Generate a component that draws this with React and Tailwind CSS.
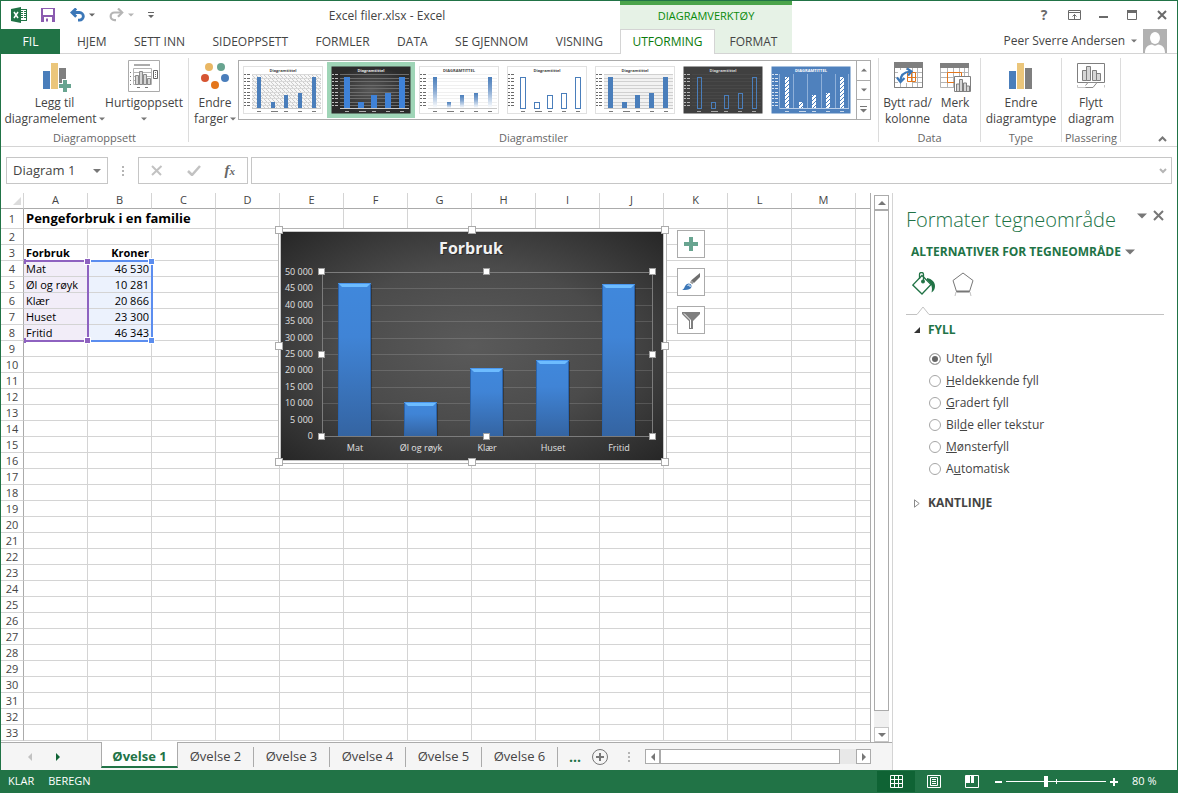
import React, { useState } from "react";

const columns = ["A", "B", "C", "D", "E", "F", "G", "H", "I", "J", "K", "L", "M"];

const forbruk = [
  { navn: "Mat", kroner: 46530 },
  { navn: "Øl og røyk", kroner: 10281 },
  { navn: "Klær", kroner: 20866 },
  { navn: "Huset", kroner: 23300 },
  { navn: "Fritid", kroner: 46343 },
];

const tabs = ["HJEM", "SETT INN", "SIDEOPPSETT", "FORMLER", "DATA", "SE GJENNOM", "VISNING"];

const sheets = ["Øvelse 1", "Øvelse 2", "Øvelse 3", "Øvelse 4", "Øvelse 5", "Øvelse 6"];

// before / key / after: the middle letter is the underlined access key
const fills = [
  ["Uten f", "y", "ll"],
  ["", "H", "eldekkende fyll"],
  ["", "G", "radert fyll"],
  ["Bil", "d", "e eller tekstur"],
  ["", "M", "ønsterfyll"],
  ["A", "u", "tomatisk"],
];

function formatNumber(n) {
  return String(n).replace(/\B(?=(\d{3})+$)/g, " ");
}

function Arrow({ dir = "down", className = "text-[#777777]", size = 7 }) {
  const points = {
    down: "0,2 8,2 4,6",
    up: "0,6 8,6 4,2",
    left: "6,0 6,8 2,4",
    right: "2,0 2,8 6,4",
  };
  return (
    <svg width={size} height={size} viewBox="0 0 8 8" className={`inline-block shrink-0 ${className}`}>
      <polygon points={points[dir]} fill="currentColor" />
    </svg>
  );
}

function QuickAccess() {
  return (
    <div className="flex items-center pl-2.5">
      <svg width="16" height="16" viewBox="0 0 16 16">
        <rect x="8.5" y="2.5" width="7" height="11" fill="#fff" stroke="#217346" />
        <path d="M10 4.5h2M13 4.5h2M10 6.5h2M13 6.5h2M10 8.5h2M13 8.5h2M10 10.5h2M13 10.5h2" stroke="#217346" />
        <path d="M0 2 10 0v16L0 14z" fill="#217346" />
        <path d="M3 5l4 6M7 5l-4 6" stroke="#fff" strokeWidth="1.5" />
      </svg>
      <button aria-label="Lagre" className="ml-3.5">
        <svg width="14" height="14" viewBox="0 0 14 14">
          <path d="M0 0h14v14H0z" fill="#8b5bb0" />
          <path d="M2 1h10v6H2zM3 9h8v5H3z" fill="#fff" />
          <path d="M5 10.5h2v3H5z" fill="#8b5bb0" />
        </svg>
      </button>
      <button aria-label="Angre" className="ml-[15px] flex items-center">
        <svg width="15" height="14" viewBox="0 0 15 14">
          <path d="M2 4.5h7.500a3.800 3.800 0 0 1 0 7.700H8" fill="none" stroke="#3b77b8" strokeWidth="2.800" />
          <path d="M6.200.500 2 4.500 6.200 8.700" fill="none" stroke="#3b77b8" strokeWidth="2.800" />
        </svg>
        <Arrow className="ml-1 text-[#666666]" size={6} />
      </button>
      <button aria-label="Gjør om" className="ml-3.5 flex items-center">
        <svg width="15" height="14" viewBox="0 0 15 14">
          <path d="M13 4.500H5.500a3.800 3.800 0 0 0 0 7.700H7" fill="none" stroke="#b5b5b5" strokeWidth="2.200" />
          <path d="M9 .500 13.200 4.500 9 8.700" fill="none" stroke="#b5b5b5" strokeWidth="2.200" />
        </svg>
        <Arrow className="ml-1 text-[#b5b5b5]" size={6} />
      </button>
      <button aria-label="Tilpass" className="ml-3.5">
        <svg width="6" height="7" viewBox="0 0 6 7" fill="#666666">
          <path d="M0 0h6v1H0zM0 3h6L3 6z" />
        </svg>
      </button>
    </div>
  );
}

function WindowButtons() {
  return (
    <div className="flex h-7 items-center justify-end pr-px text-[#6a6a6a]">
      <button aria-label="Hjelp" className="w-7 text-center text-sm leading-4 font-bold">?</button>
      <button aria-label="Båndvisning" className="flex w-8 justify-center">
        <svg width="13" height="10" viewBox="0 0 13 10" fill="none" stroke="currentColor">
          <path d="M.5.5h12v9H.5zM.5 2.500h12M6.500 9V4.500M4.500 6.500l2-2 2 2" />
        </svg>
      </button>
      <button aria-label="Minimer" className="flex w-[26px] justify-center">
        <svg width="9" height="9" viewBox="0 0 9 9"><path d="M0 5h9v2H0z" fill="currentColor" /></svg>
      </button>
      <button aria-label="Maksimer" className="flex w-8 justify-center">
        <svg width="10" height="10" viewBox="0 0 10 10">
          <path d="M.5.5h9v9h-9z" fill="none" stroke="currentColor" />
          <path d="M0 0h10v3H0z" fill="currentColor" />
        </svg>
      </button>
      <button aria-label="Lukk" className="flex w-7 justify-center">
        <svg width="10" height="10" viewBox="0 0 10 10"><path d="M1 1l8 8M9 1 1 9" stroke="currentColor" strokeWidth="2" /></svg>
      </button>
    </div>
  );
}

function Header() {
  return (
    <header className="flex text-xs text-[#444444]">
      <div className="flex w-[619px] shrink-0 flex-col">
        <div className="flex h-7 items-center">
          <QuickAccess />
          <div className="flex-1 pt-0.5 text-center">Excel filer.xlsx - Excel</div>
        </div>
        <nav className="flex h-[25px]">
          <button className="w-[59px] bg-[#217346] text-white">FIL</button>
          <div className="flex flex-1 items-center justify-between border-b border-[#d4d4d4] pt-0.5 pr-[17px] pl-[17px]">
            {tabs.map((t) => (
              <button key={t}>{t}</button>
            ))}
          </div>
        </nav>
      </div>
      <div className="w-[172px] shrink-0 border-t-4 border-[#4aa44a] bg-[#e6f2e6]">
        <div className="flex h-6 items-center justify-center pb-0.5 text-[11px] text-[#0a8a0a]">DIAGRAMVERKTØY</div>
        <div className="flex h-[25px]">
          <button className="w-[95px] border border-b-0 border-[#d4d4d4] bg-white text-[#0a7a0a]">UTFORMING</button>
          <button className="flex-1 border-b border-[#d4d4d4] pt-0.5">FORMAT</button>
        </div>
      </div>
      <div className="flex min-w-0 flex-1 flex-col">
        <WindowButtons />
        <div className="flex h-[25px] items-center justify-end border-b border-[#d4d4d4] pr-2.5 whitespace-nowrap">
          <span>Peer Sverre Andersen</span>
          <Arrow className="mx-1.5 text-[#777777]" size={6} />
          <svg width="24" height="24" viewBox="0 0 24 24">
            <path d="M0 0h24v24H0z" fill="#b1b1b1" />
            <ellipse cx="12" cy="9" rx="5" ry="6" fill="#fff" />
            <path d="M2 24c0-6 3-8 7-8.500 2 1.500 4 1.500 6 0 4 .5 7 2.500 7 8.500z" fill="#fff" />
          </svg>
        </div>
      </div>
    </header>
  );
}

function BarsIcon({ plus }) {
  return (
    <svg width="32" height="32" viewBox="0 0 32 32">
      <rect x="4" y="11" width="7" height="18" fill="#4a7ebb" />
      <rect x="12" y="3" width="7" height="26" fill="#ebc67b" />
      <rect x="20" y="8" width="7" height={plus ? 15 : 21} fill="#7f7f7f" />
      {plus && <path d="M23 19h6v4h3v6h-3v3h-6v-3h-4v-6h4z" fill="#fff" />}
      {plus && <path d="M24 20h4v4h4v4h-4v4h-4v-4h-4v-4h4z" fill="#68a490" />}
    </svg>
  );
}

function LayoutIcon() {
  return (
    <svg width="32" height="32" viewBox="0 0 32 32" fill="none" stroke="#8a8a8a">
      <path d="M.5.5h31v31H.5z" stroke="#ababab" />
      <path d="M6 5h16" stroke="#ababab" strokeWidth="2" />
      <path d="M5.500 8.500h18v16h-18zM5 12.500h18M5 16.500h18M5 20.500h18" stroke="#b5b5b5" />
      <path d="M7.500 24.500v-9h3v9zM11.500 24.500v-13h3v13zM15.500 24.500v-10h3v10zM19.500 24.500v-6h3v6z" fill="#d6d6d6" />
      <path d="M25.500 10.500h4v8h-4z" fill="#fff" stroke="#666666" />
      <path d="M27 12.500h1M27 14.500h1M27 16.500h1M2 12.500h1M2 16.500h1M2 20.500h1M2 24.500h1M9 27.500h3M17 27.500h3" stroke="#777" />
    </svg>
  );
}

function ColorsIcon() {
  return (
    <svg width="32" height="32" viewBox="0 0 32 32">
      <circle cx="10" cy="7" r="4" fill="#e9b764" />
      <circle cx="22" cy="7" r="4" fill="#68a490" />
      <circle cx="6" cy="18" r="4" fill="#d65532" />
      <circle cx="26" cy="18" r="4" fill="#4a7ebb" />
      <circle cx="16" cy="25" r="4" fill="#e4761b" />
    </svg>
  );
}

function SwitchIcon() {
  return (
    <svg width="32" height="32" viewBox="0 0 32 32" fill="none">
      <path d="M2.500 7.500h28v20h-28zM2 12.500h28M2 17.500h28M2 22.500h28M8.500 8v20M14.500 8v20M20.500 8v20M25.500 8v20" stroke="#b5b5b5" />
      <path d="M6 10h14v13H6z" fill="#fff" />
      <path d="M15.500 12.500h8v9h-8zM19.500 12.500v9M16 17.500h8" stroke="#e4761b" />
      <path d="M2.500 7.500h28v20h-28z" stroke="#7f7f7f" />
      <path d="M2 2h29v6H2z" fill="#7f7f7f" />
      <path d="M8.500 21c0-6 3.500-9 10-9.500" stroke="#3b77b8" strokeWidth="2.200" />
      <path d="M15 8.500l4.500 3-3.500 4M5 17.500l3.500 4.500 4-4" stroke="#3b77b8" strokeWidth="2.200" />
    </svg>
  );
}

function SelectDataIcon() {
  return (
    <svg width="32" height="32" viewBox="0 0 32 32" fill="none">
      <path d="M1.500 7.500h28v20h-28zM2 12.500h27M2 17.500h27M2 22.500h27M8.500 8v20M14.500 8v20M20.500 8v20M25.500 8v20" stroke="#b5b5b5" />
      <path d="M8.500 12.500h14v10h-14z" stroke="#e4761b" />
      <path d="M1 3h29v5H1z" fill="#7f7f7f" />
      <path d="M15.500 16.500h16v15h-16z" fill="#fff" stroke="#7f7f7f" />
      <path d="M17.500 31v-7h3v7M20.500 31V19.500h3V31M24.500 31v-8h3v8M27.500 31v-5h3v5" fill="#d6d6d6" stroke="#7f7f7f" />
    </svg>
  );
}

function MoveIcon() {
  return (
    <svg width="32" height="32" viewBox="0 0 32 32" fill="none" stroke="#7f7f7f">
      <path d="M2.500 3.500h27v19h-27z" />
      <path d="M7.500 20.500v-10h4v10zM11.500 20.500v-14h4v14zM17.500 20.500v-10h4v10zM21.500 20.500v-7h4v7z" fill="#d6d6d6" />
      <path d="M10 27.500h8l4-5h-9l-2.500 3" fill="#fff" stroke="#8a8a8a" />
      <path d="M2.500 25v2.500h8M29.500 25v2.500" stroke="#c6c6c6" />
    </svg>
  );
}

function RibbonButton({ icon, lines, arrow, className }) {
  return (
    <button className={`flex flex-col items-center pt-0.5 text-xs leading-4 whitespace-nowrap text-[#444444] ${className}`}>
      {icon}
      <span className="mt-[3px]">{lines[0]}</span>
      <span className="flex h-4 items-center gap-0.5">
        {lines[1]}
        {arrow && <Arrow size={6} />}
      </span>
    </button>
  );
}

function RibbonGroup({ label, children }) {
  return (
    <>
      <section className="flex flex-col">
        <div className="flex h-[72px]">{children}</div>
        <div className="text-center text-[11px] leading-4 text-[#666666]">{label}</div>
      </section>
      <div className="h-[84px] w-px bg-[#dcdcdc]" />
    </>
  );
}

const thumbStyles = [
  { title: "Diagramtittel", bg: "#ffffff", plot: "url(#checks)", grid: "#d9d9d9", fg: "#444444", w: 4, fill: "#4a7ebb" },
  { title: "Diagramtittel", bg: "url(#darkThumb)", grid: "#6c6c6c", fg: "#e6e6e6", w: 6, fill: "#3f82d8" },
  { title: "DIAGRAMTITTEL", bg: "#ffffff", grid: "#f0f0f0", fg: "#444444", w: 4, fill: "url(#fadeBar)" },
  { title: "Diagramtittel", bg: "#ffffff", fg: "#444444", w: 5, fill: "#ffffff", stroke: "#4a7ebb" },
  { title: "Diagramtittel", bg: "#ffffff", plot: "#f2f2f2", grid: "#d0d0d0", fg: "#444444", w: 5, fill: "#4a7ebb" },
  { title: "Diagramtittel", bg: "#404040", grid: "#484848", fg: "#d6d6d6", w: 4, fill: "none", stroke: "#4a7ebb" },
  { title: "DIAGRAMTITTEL", bg: "#4f81bd", fg: "#ffffff", w: 4, fill: "url(#hatch)", columns: true },
];

function ThumbDefs() {
  return (
    <svg width="0" height="0" className="absolute">
      <defs>
        <pattern id="checks" width="4" height="4" patternUnits="userSpaceOnUse">
          <path d="M0 0h4v4H0z" fill="#f7f7f7" />
          <path d="M0 0l4 4" stroke="#cccccc" />
        </pattern>
        <pattern id="hatch" width="4" height="4" patternUnits="userSpaceOnUse">
          <path d="M0 0h4v4H0z" fill="#ffffff" />
          <path d="M-1 5 5-1M-1 1 1-1M3 5l2-2" stroke="#4f81bd" strokeWidth="1" />
        </pattern>
        <linearGradient id="fadeBar" x1="0" y1="0" x2="0" y2="1">
          <stop offset="0" stopColor="#4a7ebb" />
          <stop offset="0.400" stopColor="#7fa3cf" />
          <stop offset="1" stopColor="#ffffff" />
        </linearGradient>
        <radialGradient id="darkThumb">
          <stop offset="0" stopColor="#595959" />
          <stop offset="1" stopColor="#2b2b2b" />
        </radialGradient>
      </defs>
    </svg>
  );
}

function Thumb({ s }) {
  const tops = [11, 36, 29, 27, 11];
  return (
    <svg width="80" height="48" viewBox="0 0 80 48">
      <rect x="0.5" y="0.5" width="79" height="47" fill={s.bg} stroke={s.bg === "#ffffff" ? "#e1e1e1" : "none"} />
      {s.plot && <rect x="9" y="8" width="69" height="34" fill={s.plot} />}
      {s.grid &&
        [8, 12, 15, 19, 22, 26, 29, 32, 36, 39].map((y) => (
          <path key={y} d={`M9 ${y + 0.5}h69`} stroke={s.grid} />
        ))}
      {s.columns && <path d="M8.500 8v35M22.500 8v35M36.500 8v35M50.500 8v35M64.500 8v35M77.500 8v35" stroke="#8fb0d9" />}
      {!s.stroke && <path d="M9 42.500h69" stroke={s.columns ? "#b9cee8" : "#c8c8c8"} />}
      {[8, 12, 15, 19, 22, 26, 29, 32, 36, 39].map((y) => (
        <path key={y} d={`M1 ${y + 0.5}h2M4 ${y + 0.5}h3`} stroke={s.fg} opacity="0.8" />
      ))}
      {tops.map((y, i) => {
        const cx = 16 + i * 14 - (i > 1 ? 1 : 0);
        const x = Math.floor(cx - s.w / 2);
        return (
          <g key={i}>
            <rect
              x={s.stroke ? x + 0.5 : x}
              y={y + (s.stroke ? 0.5 : 0)}
              width={s.w}
              height={42 - y}
              fill={s.fill}
              stroke={s.stroke || "none"}
            />
            <path d={`M${cx - 2} 45.500h${i === 1 ? 7 : 4}`} stroke={s.fg} opacity="0.7" />
          </g>
        );
      })}
      <text x="40" y="5.500" fontSize="4" fontWeight="700" textAnchor="middle" fill={s.fg}>
        {s.title}
      </text>
    </svg>
  );
}

function StyleGallery() {
  const [selected, setSelected] = useState(1);
  return (
    <div className="mt-0.5 flex h-[60px] border border-[#ababab]">
      <ThumbDefs />
      {thumbStyles.map((s, i) => (
        <button
          key={i}
          aria-label={`Stil ${i + 1}`}
          onClick={() => setSelected(i)}
          className={`mt-px h-14 w-[88px] p-1 ${selected === i ? "bg-[#9fd5b7]" : ""}`}
        >
          <Thumb s={s} />
        </button>
      ))}
      <div className="ml-px flex w-[14px] flex-col divide-y divide-[#ababab] border-l border-[#ababab]">
        <button aria-label="Forrige rad" className="flex flex-1 items-center justify-center">
          <Arrow dir="up" size={6} />
        </button>
        <button aria-label="Neste rad" className="flex flex-1 items-center justify-center">
          <Arrow size={6} />
        </button>
        <button aria-label="Mer" className="flex flex-1 items-center justify-center">
          <svg width="7" height="7" viewBox="0 0 7 7" fill="#777777"><path d="M0 0h7v1H0zM0 3h7L3.500 6.500z" /></svg>
        </button>
      </div>
    </div>
  );
}

function Ribbon() {
  return (
    <div className="relative flex h-[93px] items-start border-b border-[#d4d4d4] pt-1">
      <RibbonGroup label="Diagramoppsett">
        <RibbonButton icon={<BarsIcon plus />} lines={["Legg til", "diagramelement"]} arrow className="w-[107px]" />
        <RibbonButton icon={<LayoutIcon />} lines={["Hurtigoppsett", ""]} arrow className="mr-2 w-[72px]" />
      </RibbonGroup>
      <RibbonGroup label="Diagramstiler">
        <RibbonButton icon={<ColorsIcon />} lines={["Endre", "farger"]} arrow className="w-[49px] pl-[3px]" />
        <StyleGallery />
        <div className="w-[7px]" />
      </RibbonGroup>
      <RibbonGroup label="Data">
        <RibbonButton icon={<SwitchIcon />} lines={["Bytt rad/", "kolonne"]} className="w-[57px]" />
        <RibbonButton icon={<SelectDataIcon />} lines={["Merk", "data"]} className="mr-1.5 w-[38px]" />
      </RibbonGroup>
      <RibbonGroup label="Type">
        <RibbonButton icon={<BarsIcon />} lines={["Endre", "diagramtype"]} className="w-20" />
      </RibbonGroup>
      <RibbonGroup label="Plassering">
        <RibbonButton icon={<MoveIcon />} lines={["Flytt", "diagram"]} className="w-[58px]" />
      </RibbonGroup>
      <button aria-label="Skjul båndet" className="mr-2.5 mb-1 ml-auto self-end text-[#777777]">
        <svg width="9" height="6" viewBox="0 0 9 6"><path d="M1 5l3.500-3.500L8 5" fill="none" stroke="currentColor" strokeWidth="2" /></svg>
      </button>
    </div>
  );
}

function FormulaBar() {
  return (
    <div className="flex pt-2.5 pr-[5px] pb-[9px] pl-[5px] text-[#444444]">
      <div className="flex h-[27px] w-[102px] items-center border border-[#c6c6c6]">
        <input aria-label="Navneboks" defaultValue="Diagram 1" className="w-0 flex-1 pl-1.5 text-[13px] outline-none" />
        <Arrow className="mr-1.5 text-[#777777]" size={8} />
      </div>
      <div className="flex w-[30px] flex-col items-center justify-center gap-0.5">
        <i className="size-0.5 bg-[#b5b5b5]" />
        <i className="size-0.5 bg-[#b5b5b5]" />
        <i className="size-0.5 bg-[#b5b5b5]" />
      </div>
      <div className="flex w-[110px] items-center justify-between border border-[#c6c6c6] px-3">
        <button aria-label="Avbryt">
          <svg width="12" height="11" viewBox="0 0 12 11"><path d="M1 1l9 9M10.500 1 1 10" stroke="#c2c2c2" strokeWidth="2" /></svg>
        </button>
        <button aria-label="Skriv inn">
          <svg width="14" height="11" viewBox="0 0 14 11"><path d="M1 6l4 4 8-9" fill="none" stroke="#c2c2c2" strokeWidth="2.500" /></svg>
        </button>
        <button aria-label="Sett inn funksjon" className="font-['Liberation_Serif',serif] text-[15px] leading-4 font-bold text-[#666666] italic">
          f<span className="text-[11px]">x</span>
        </button>
      </div>
      <div className="ml-[3px] flex flex-1 items-center border border-[#c6c6c6]">
        <input aria-label="Formellinje" className="w-0 flex-1 px-2 text-xs outline-none" />
        <svg width="8" height="6" viewBox="0 0 8 6" className="mr-1"><path d="M1 1l3 3 3-3" fill="none" stroke="#b5b5b5" strokeWidth="2" /></svg>
      </div>
    </div>
  );
}

function cellFor(row, col) {
  if (row === 1 && col === "A") return "Pengeforbruk i en familie";
  if (row === 3 && col === "A") return "Forbruk";
  if (row === 3 && col === "B") return "Kroner";
  const item = forbruk[row - 4];
  if (item && col === "A") return item.navn;
  if (item && col === "B") return formatNumber(item.kroner);
  return "";
}

function cellClass(row, col) {
  let c = "overflow-visible border-r border-b border-[#d4d4d4] px-0.5 py-0 whitespace-nowrap text-black";
  if (row === 1) c += " h-5 text-[13px] leading-[19px] font-bold";
  else c += " h-4 text-[11px] leading-[15px]";
  if (row === 1 && (col === "A" || col === "B")) c += " border-r-transparent";
  if (row === 3) c += " font-bold";
  if (col === "B") c += " text-right";
  if (row > 3 && row < 9 && col === "A") c += " bg-[#f2edf8]";
  if (row > 3 && row < 9 && col === "B") c += " bg-[#ecf2fd]";
  return c;
}

function Sheet() {
  const rows = Array.from({ length: 33 }, (_, i) => i + 1);
  return (
    <table className="w-full table-fixed border-separate border-spacing-0">
      <colgroup>
        <col className="w-[23px]" />
        {columns.map((c) => (
          <col key={c} className="w-16" />
        ))}
        <col />
      </colgroup>
      <thead>
        <tr className="text-[11px] leading-[14px] text-[#444444]">
          <th className="h-4 border-r border-b border-[#ababab] border-r-[#d4d4d4] p-0">
            <svg width="8" height="8" viewBox="0 0 8 8" className="ml-auto mr-0.5"><path d="M8 0v8H0z" fill="#dcdcdc" /></svg>
          </th>
          {columns.map((c) => (
            <th key={c} className="h-4 border-r border-b border-r-[#d4d4d4] border-b-[#ababab] p-0 align-top font-normal">{c}</th>
          ))}
          <th className="h-4 border-b border-[#ababab] p-0" />
        </tr>
      </thead>
      <tbody>
        {rows.map((r) => (
          <tr key={r}>
            <th className="border-r border-b border-r-[#ababab] border-b-[#d4d4d4] p-0 text-center text-[11px] leading-[15px] font-normal text-[#444444]">{r}</th>
            {columns.map((c) => (
              <td key={c} className={cellClass(r, c)}>{cellFor(r, c)}</td>
            ))}
            <td className="border-b border-[#d4d4d4] p-0" />
          </tr>
        ))}
      </tbody>
    </table>
  );
}

function Chart() {
  const left = 44;
  const right = 375;
  const top = 44;
  const bottom = 208;
  const ticks = Array.from({ length: 11 }, (_, i) => i * 5000);
  const yOf = (v) => bottom - (v / 50000) * (bottom - top);
  const handles = [];
  [1, 194, 387].forEach((x) => [2, 118, 234].forEach((y) => (x !== 194 || y !== 118) && handles.push([x, y])));
  const plotHandles = [];
  [44, 209, 375].forEach((x) => [44, 127, 209].forEach((y) => (x !== 209 || y !== 127) && plotHandles.push([x, y])));

  return (
    <svg width="389" height="236" viewBox="0 0 389 236" className="absolute top-[35px] left-[277px] overflow-visible">
      <defs>
        <radialGradient id="chartBg" cx="0.5" cy="0.5" r="0.700">
          <stop offset="0" stopColor="#5a5a5a" />
          <stop offset="0.500" stopColor="#4b4b4b" />
          <stop offset="1" stopColor="#272727" />
        </radialGradient>
        <linearGradient id="barFill" x1="0" y1="0" x2="0" y2="1">
          <stop offset="0" stopColor="#4088dc" />
          <stop offset="0.350" stopColor="#4084d6" />
          <stop offset="1" stopColor="#3464a2" />
        </linearGradient>
      </defs>
      <rect x="0.5" y="0.5" width="388" height="235" fill="#fff" stroke="#b5b5b5" />
      <rect x="2.5" y="3.500" width="383" height="229" fill="none" stroke="#c6c6c6" />
      <rect x="3" y="4" width="382" height="228" fill="url(#chartBg)" />
      <text x="194" y="27" fontSize="16" fontWeight="700" textAnchor="middle" fill="#1d1d1d" opacity="0.6">Forbruk</text>
      <text x="193" y="26" fontSize="16" fontWeight="700" textAnchor="middle" fill="#f2f2f2">Forbruk</text>
      {ticks.map((v) => (
        <g key={v}>
          <path d={`M${left} ${Math.round(yOf(v)) + 0.5}H${right}`} stroke="#ffffff" opacity={v === 0 ? 0.5 : 0.14} />
          <text x="35" y={Math.round(yOf(v)) + 3} fontSize="9" textAnchor="end" fill="#e0e0e0">{formatNumber(v)}</text>
        </g>
      ))}
      <rect x={left + 0.5} y={top + 0.5} width={right - left - 1} height={bottom - top} fill="none" stroke="#7c7c7c" />
      {forbruk.map((f, i) => {
        const x = 60 + i * 66;
        const y = Math.round(yOf(f.kroner));
        return (
          <g key={f.navn}>
            <rect x={x + 1} y={y + 2} width="33" height={bottom - y - 2} fill="#222222" opacity="0.5" />
            <rect x={x} y={y} width="33" height={bottom - y} fill="url(#barFill)" />
            <path d={`M${x + 0.5} ${y}V${bottom}M${x + 32.5} ${y}V${bottom}`} stroke="#2b64ac" />
            <path d={`M${x} ${y}h33l-4 4h-25z`} fill="#6dbcff" />
            <path d={`M${x + 1} ${y + 0.5}h31`} stroke="#4a97ee" />
            <text x={x + 17} y="223" fontSize="9" textAnchor="middle" fill="#e0e0e0">{f.navn}</text>
          </g>
        );
      })}
      {plotHandles.map(([x, y]) => (
        <rect key={`${x}-${y}`} x={x - 3.5} y={y - 3.5} width="6" height="6" fill="#fff" stroke="#a0a0a0" />
      ))}
      {handles.map(([x, y]) => (
        <rect key={`${x}-${y}`} x={x - 3.5} y={y - 3.5} width="7" height="7" fill="#fff" stroke="#ababab" />
      ))}
    </svg>
  );
}

function ChartButtons() {
  const cls = "flex size-7 items-center justify-center border border-[#ababab] bg-white";
  return (
    <div className="absolute top-[37px] left-[676px] flex flex-col gap-2.5">
      <button aria-label="Diagramelementer" className={cls}>
        <svg width="14" height="14" viewBox="0 0 14 14"><path d="M5 0h4v5h5v4H9v5H5V9H0V5h5z" fill="#68a490" /></svg>
      </button>
      <button aria-label="Diagramstiler" className={cls}>
        <svg width="18" height="18" viewBox="0 0 18 18">
          <path d="M18 0v4l-6 6-3-2.500z" fill="#6e6e6e" />
          <path d="M8.500 8.500l2.500 2" stroke="#9a9a9a" strokeWidth="2" />
          <path d="M0 17c3-1 2.500-6 6.500-6.500 3 0 4 3 2 5C7 17 4 17 0 17z" fill="#3b77b8" />
          <path d="M5.500 13c1-2 3.500-1 2.500 1" fill="none" stroke="#fff" />
        </svg>
      </button>
      <button aria-label="Diagramfiltre" className={cls}>
        <svg width="18" height="17" viewBox="0 0 18 17">
          <path d="M0 0h18v2l-7 7v8H7V9L0 2z" fill="#7f7f7f" />
          <path d="M2 1.500l6.500 6.500v8" fill="none" stroke="#fff" />
        </svg>
      </button>
    </div>
  );
}

// Outlines of the source ranges A4:A8 and B4:B8
function RangeMarkers() {
  const dot = "absolute size-[5px] outline outline-white";
  return (
    <>
      <div className="absolute top-[67px] left-[23px] h-[82px] w-[65px] border-2 border-l-0 border-[#8e62c0]">
        <i className={`${dot} -top-[3px] -right-[3px] bg-[#8e62c0]`} />
        <i className={`${dot} -right-[3px] -bottom-[3px] bg-[#8e62c0]`} />
        <i className="absolute -top-[3px] left-0 h-[5px] w-0.5 bg-[#8e62c0]" />
        <i className="absolute -bottom-[3px] left-0 h-[5px] w-0.5 bg-[#8e62c0]" />
      </div>
      <div className="absolute top-[67px] left-[90px] h-[82px] w-[62px] border-2 border-l-0 border-[#5b8def]">
        <i className={`${dot} -top-[3px] -right-[3px] bg-[#5b8def]`} />
        <i className={`${dot} -right-[3px] -bottom-[3px] bg-[#5b8def]`} />
      </div>
    </>
  );
}

function VerticalScroll() {
  return (
    <div className="flex w-[21px] shrink-0 flex-col pt-0.5 pr-[3px] pl-[3px]">
      <button aria-label="Rull opp" className="flex h-[15px] items-center justify-center border border-[#ababab]">
        <Arrow dir="up" size={8} />
      </button>
      <div className="flex flex-1 flex-col bg-[#f0f0f0]">
        <div className="flex-1 border border-[#ababab] bg-white" />
        <div className="h-4" />
      </div>
      <button aria-label="Rull ned" className="flex h-[15px] items-center justify-center border border-[#c6c6c6]">
        <Arrow size={8} />
      </button>
    </div>
  );
}

function SheetTabs() {
  const [active, setActive] = useState(0);
  return (
    <div className="flex h-7 items-start bg-[#f5f5f5] text-[#444444]">
      <div className="flex h-7 w-[100px] shrink-0 items-center gap-5 border-t border-[#ababab] pl-[25px]">
        <button aria-label="Forrige ark" className="flex"><Arrow dir="left" size={8} className="text-[#c2c2c2]" /></button>
        <button aria-label="Neste ark" className="flex"><Arrow dir="right" size={8} className="text-[#0f6334]" /></button>
      </div>
      {sheets.map((s, i) =>
        i === active ? (
          <button key={s} className="h-[26px] w-[77px] border-x border-b-2 border-x-[#ababab] border-b-[#217346] bg-white pt-1 text-[13px] leading-5 font-bold text-[#217346]">
            {s}
          </button>
        ) : (
          <button key={s} onClick={() => setActive(i)} className="h-7 w-[76px] border-t border-[#ababab] text-[13px]">
            <span className="flex h-5 items-center justify-center border-r border-[#ababab]">{s}</span>
          </button>
        )
      )}
      <div className="flex h-7 min-w-0 flex-1 items-center border-t border-[#ababab] pr-[21px] pl-2">
        <button aria-label="Flere ark" className="w-[18px] text-sm leading-5 font-bold text-[#217346]">...</button>
        <button aria-label="Nytt ark" className="ml-2">
          <svg width="16" height="16" viewBox="0 0 16 16" fill="none" stroke="#777777">
            <circle cx="8" cy="8" r="7.500" />
            <path d="M8 4v8M4 8h8" strokeWidth="2" />
          </svg>
        </button>
        <div className="ml-5 flex flex-col gap-0.5">
          <i className="size-0.5 bg-[#b5b5b5]" />
          <i className="size-0.5 bg-[#b5b5b5]" />
          <i className="size-0.5 bg-[#b5b5b5]" />
        </div>
        <div className="ml-[15px] flex h-[15px] flex-1 bg-[#e8e8e8]">
          <button aria-label="Rull til venstre" className="flex w-[15px] items-center justify-center border border-[#ababab] bg-white">
            <Arrow dir="left" size={8} />
          </button>
          <div className="flex-1 border border-[#ababab] bg-white" />
          <div className="w-4" />
          <button aria-label="Rull til høyre" className="flex w-[15px] items-center justify-center border border-[#ababab] bg-white">
            <Arrow dir="right" size={8} />
          </button>
        </div>
      </div>
    </div>
  );
}

function FormatPane() {
  return (
    <aside className="w-[285px] shrink-0 border-l border-[#d4d4d4] pr-[13px] pl-[13px] text-xs text-[#444444]">
      <div className="flex items-start pt-[13px]">
        <h2 className="text-[20px] leading-7 font-light whitespace-nowrap text-[#217346]">Formater tegneområde</h2>
        <div className="mt-1 ml-auto flex items-center gap-1.5">
          <button aria-label="Rutealternativer" className="flex"><Arrow size={10} /></button>
          <button aria-label="Lukk rute">
            <svg width="11" height="11" viewBox="0 0 11 11"><path d="M1 1l9 9M10 1l-9 9" stroke="#777777" strokeWidth="2" /></svg>
          </button>
        </div>
      </div>
      <button className="mt-2.5 ml-[5px] flex items-center gap-1 leading-4 font-bold whitespace-nowrap text-[#217346]">
        ALTERNATIVER FOR TEGNEOMRÅDE
        <Arrow size={10} />
      </button>
      <div className="mt-3 ml-1.5 flex gap-4">
        <button aria-label="Fyll og linje">
          <svg width="24" height="25" viewBox="0 0 24 25" fill="none" stroke="#217346" strokeWidth="1.300">
            <path d="M10 3.500 19 12.500 10 22 .8 13z" />
            <path d="M7.500 7V2.500q0-2 2-2t2 2V9" />
            <circle cx="11" cy="9.500" r="1.300" fill="#217346" />
            <path d="M15 6c5 1 8 4 8 8 0 3-1 5-3.500 6.500C21 15 19 11 15 8z" fill="#217346" stroke="none" />
          </svg>
        </button>
        <button aria-label="Effekter">
          <svg width="22" height="25" viewBox="0 0 22 25" fill="none">
            <path d="M11 1 21 8.500 17.500 19.500h-13L1 8.500z" stroke="#777777" />
            <path d="M4.500 19.500h13" stroke="#777777" strokeWidth="2" />
            <path d="M4 20l-1 4M18 20l1 4" stroke="#c2c2c2" />
          </svg>
        </button>
      </div>
      <div className="mt-[9px] flex items-end">
        <div className="h-px w-[11px] bg-[#c2c2c2]" />
        <svg width="12" height="9" viewBox="0 0 12 9"><path d="M0 8.500 6 1l6 7.500" fill="none" stroke="#c2c2c2" /></svg>
        <div className="h-px flex-1 bg-[#c2c2c2]" />
      </div>
      <button className="mt-[7px] ml-2 flex items-center gap-2 leading-4 font-bold text-[#217346]">
        <svg width="6" height="6" viewBox="0 0 6 6"><path d="M6 0v6H0z" fill="#333333" /></svg>
        FYLL
      </button>
      <fieldset className="mt-2.5 ml-[23px]">
        {fills.map(([before, key, after], i) => (
          <label key={key} className="flex h-[22px] items-center gap-[5px]">
            <input
              type="radio"
              name="fyll"
              defaultChecked={i === 0}
              className="size-3 appearance-none rounded-full border border-[#a6a6a6] bg-white checked:bg-[#666666] checked:shadow-[inset_0_0_0_2px_white]"
            />
            <span>
              {before}
              <u>{key}</u>
              {after}
            </span>
          </label>
        ))}
      </fieldset>
      <button className="mt-[15px] ml-2 flex items-center gap-2 leading-4 font-bold">
        <svg width="6" height="9" viewBox="0 0 6 9"><path d="M.5.800 5.200 4.500.5 8.200z" fill="#fff" stroke="#8a8a8a" /></svg>
        KANTLINJE
      </button>
    </aside>
  );
}

function StatusBar() {
  return (
    <footer className="flex h-[23px] items-center bg-[#217346] text-[11px] text-white">
      <span className="pl-[7px]">KLAR</span>
      <span className="pl-3.5">BEREGN</span>
      <div className="ml-auto flex h-full items-center">
        <button aria-label="Normal" className="flex h-[21px] w-[38px] items-center justify-center bg-[#0f6334]">
          <svg width="13" height="13" viewBox="0 0 13 13"><path d="M.5.5h12v12H.5zM4.500 0v13M8.500 0v13M0 4.500h13M0 8.500h13" fill="none" stroke="#fff" /></svg>
        </button>
        <button aria-label="Sideoppsett" className="flex w-[38px] justify-center">
          <svg width="14" height="13" viewBox="0 0 14 13" fill="none" stroke="#fff"><path d="M.5.5h13v12H.5zM3.500 2.500h7v8h-7zM5 4.500h4M5 6.500h4M5 8.500h4" /></svg>
        </button>
        <button aria-label="Sideskift" className="flex w-[38px] justify-center">
          <svg width="14" height="13" viewBox="0 0 14 13"><path d="M.5.5h13v12H.5z" fill="none" stroke="#fff" /><path d="M1 1h4v7H1zM6 1h3v7H6z" fill="#fff" /></svg>
        </button>
        <button aria-label="Zoom ut" className="ml-1 flex">
          <svg width="7" height="8" viewBox="0 0 7 8"><path d="M0 3h7v2H0z" fill="#fff" /></svg>
        </button>
        <div className="relative ml-1 flex items-center">
          <input
            type="range"
            aria-label="Zoom"
            defaultValue="40"
            className="h-px w-[100px] appearance-none bg-white [&::-webkit-slider-thumb]:h-[11px] [&::-webkit-slider-thumb]:w-1 [&::-webkit-slider-thumb]:appearance-none [&::-webkit-slider-thumb]:bg-white"
          />
          <i className="absolute left-1/2 h-[5px] w-px bg-white" />
        </div>
        <button aria-label="Zoom inn" className="ml-1 flex">
          <svg width="8" height="8" viewBox="0 0 8 8"><path d="M3 0h2v3h3v2H5v3H3V5H0V3h3z" fill="#fff" /></svg>
        </button>
        <span className="w-[59px] pl-3.5">80 %</span>
      </div>
    </footer>
  );
}

export default function App() {
  return (
    <div className="flex min-h-screen flex-col border-x border-t border-[#217346] bg-white font-['Open_Sans','Noto_Sans',sans-serif]">
      <Header />
      <Ribbon />
      <FormulaBar />
      <main className="flex flex-1">
        <div className="flex min-w-0 flex-1 flex-col">
          <div className="flex flex-1">
            <div className="relative min-w-0 flex-1 border-r border-[#ababab] pb-px">
              <Sheet />
              <RangeMarkers />
              <Chart />
              <ChartButtons />
            </div>
            <VerticalScroll />
          </div>
          <SheetTabs />
        </div>
        <FormatPane />
      </main>
      <StatusBar />
    </div>
  );
}
